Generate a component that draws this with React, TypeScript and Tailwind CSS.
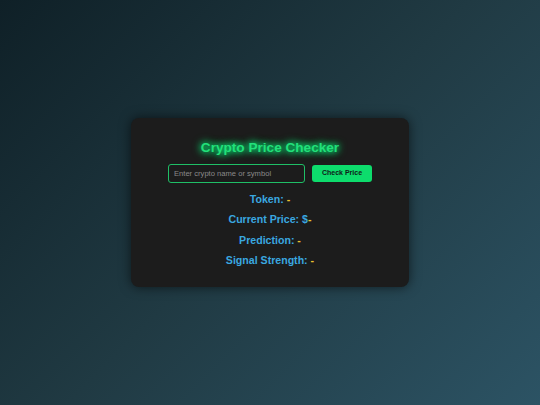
export default function App() {
  const rows: Array<{ label: string; value: string }> = [
    { label: "Token:", value: "-" },
    { label: "Current Price: $", value: "-" },
    { label: "Prediction:", value: "-" },
    { label: "Signal Strength:", value: "-" },
  ];

  return (
    <div className="flex min-h-screen items-center justify-center bg-[linear-gradient(135deg,#0f2027,#203a43,#2c5364)] font-['Liberation_Sans',Arial,sans-serif]">
      <div className="flex w-[278px] flex-col items-center rounded-lg bg-[#1c1c1c] px-5 pt-[21px] pb-[20px] shadow-[0_0_12px_rgba(0,0,0,0.6)]">
        <h1 className="text-[13.6px] font-bold leading-[17px] text-[#22e07a] [text-shadow:0_0_6px_#00ff7f,0_0_10px_#00ff7f]">
          Crypto Price Checker
        </h1>
        <div className="mt-[8px] flex items-center gap-[7px]">
          <input
            type="text"
            placeholder="Enter crypto name or symbol"
            className="h-[19px] w-[137px] rounded-[3px] border border-[#1fbf66] bg-[#1c1c1c] px-[5px] text-[7.6px] text-gray-300 outline-none placeholder:text-[#8a8a8a]"
          />
          <button className="h-[17px] w-[60px] rounded-[3px] bg-[#0ddc6c] text-[7px] font-bold text-[#102018]">
            Check Price
          </button>
        </div>
        <div className="mt-[10px] flex flex-col items-center gap-[7.6px]">
          {rows.map((r) => (
            <p key={r.label} className="text-[10.6px] font-bold leading-[13px] text-[#3aa8e0]">
              {r.label}
              {r.label.endsWith("$") ? "" : " "}
              <span className="text-[#e8c030]">{r.value}</span>
            </p>
          ))}
        </div>
      </div>
    </div>
  );
}
